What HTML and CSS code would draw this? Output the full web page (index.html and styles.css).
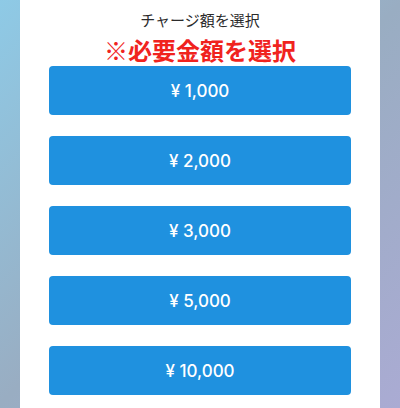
FILE: index.html
```html
<html>
  <head>
    <meta charset="utf-8">
    <title>チャージ額を選択</title>
    <link rel="stylesheet" href="styles.css">
  </head>
  <body>
    <div class="charge_panel">
      <div class="charge_title">チャージ額を選択</div>
      <div class="charge_notice">※必要金額を選択</div>
      <div class="charge_list">
        <button class="charge_button">¥ 1,000</button>
        <button class="charge_button">¥ 2,000</button>
        <button class="charge_button">¥ 3,000</button>
        <button class="charge_button">¥ 5,000</button>
        <button class="charge_button">¥ 10,000</button>
      </div>
    </div>
  </body>
</html>
```

FILE: styles.css
```css
html, body
  {
  margin: 0;
  height: 100%;
  }

body
  {
  background: linear-gradient(135deg, #8ecae6 0%, #99adc2 50%, #aaabd3 100%);
  font-family: "Noto Sans CJK JP", "Noto Sans", sans-serif;
  overflow: hidden;
  }

.charge_panel
  {
  margin: 0 20px;
  height: 100%;
  background: #ffffff;
  text-align: center;
  }

.charge_title
  {
  padding-top: 10px;
  font-size: 15px;
  line-height: 20px;
  color: #2b2b2b;
  }

.charge_notice
  {
  margin-top: 5px;
  font-size: 24px;
  line-height: 30px;
  font-weight: bold;
  color: #f0231e;
  }

.charge_list
  {
  display: flex;
  flex-direction: column;
  gap: 21px;
  padding: 1px 29px 0;
  }

.charge_button
  {
  height: 49px;
  border: none;
  border-radius: 4px;
  background: #1f91df;
  color: #ffffff;
  font-family: Inter, "Noto Sans", sans-serif;
  font-weight: 500;
  font-size: 17px;
  }
```
